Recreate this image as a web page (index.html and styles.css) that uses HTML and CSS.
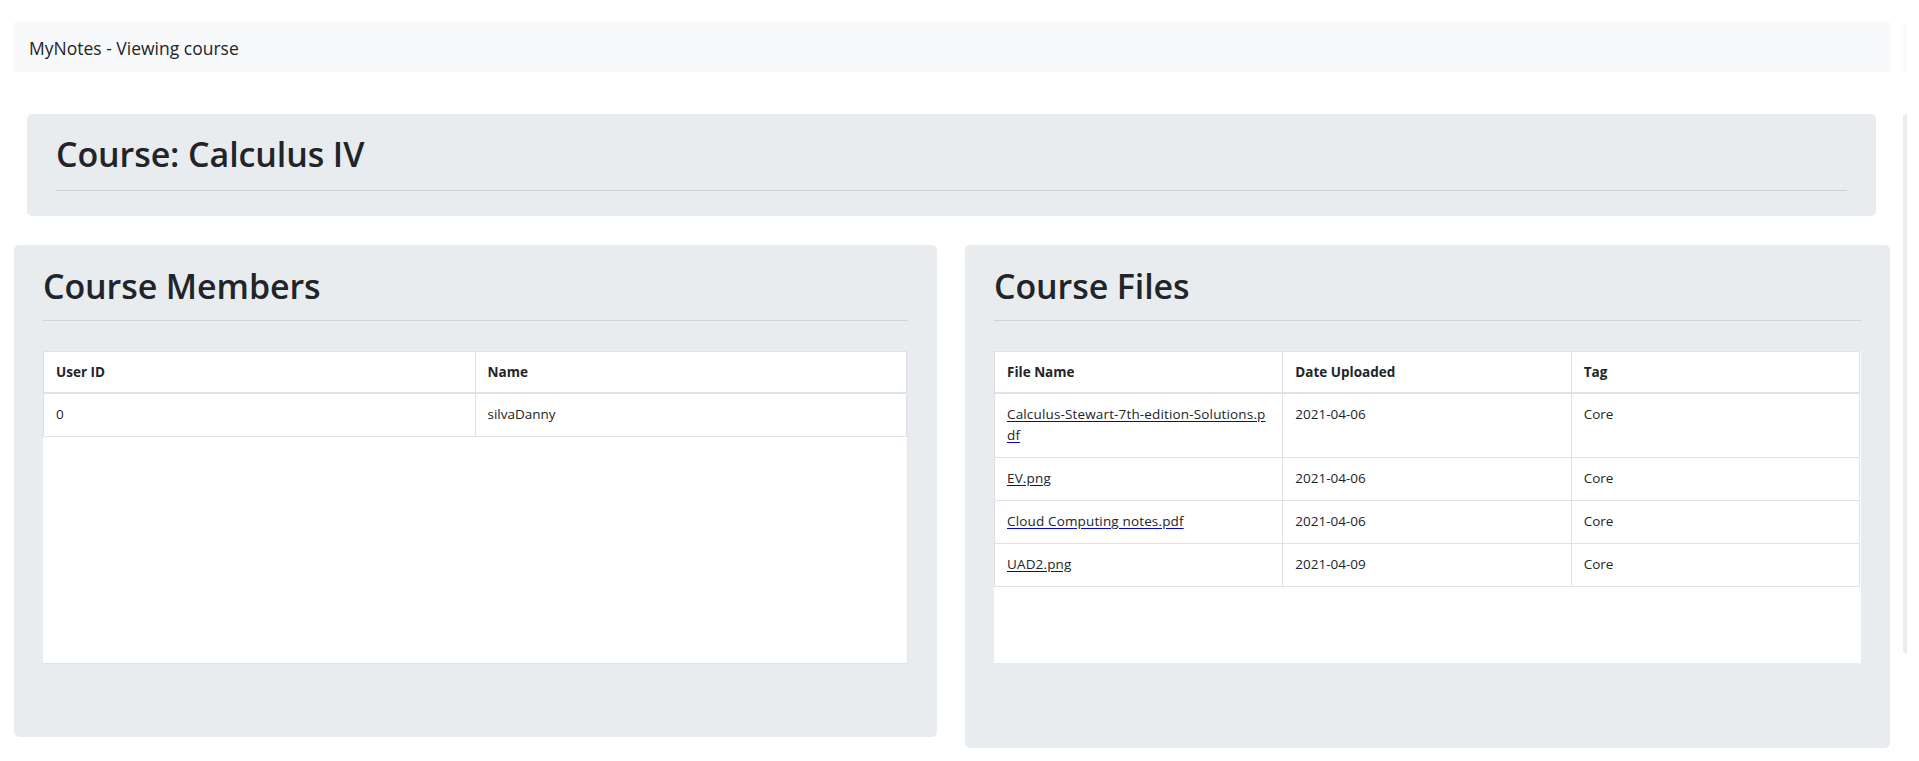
FILE: index.html
```html
<!DOCTYPE html>
<html lang="en">
<head>
<meta charset="utf-8">
<title>MyNotes - Viewing course</title>
<link rel="stylesheet" href="styles.css">
</head>
<body>
<div class="page">
  <nav class="navbar"><span class="brand">MyNotes - Viewing course</span></nav>
  <div class="strip strip-top"></div>

  <main class="content">
    <section class="jumbotron">
      <h1 class="title">Course: Calculus IV</h1>
      <hr class="rule">
    </section>

    <div class="cards">
      <section class="card card-members">
        <h2 class="title">Course Members</h2>
        <hr class="rule">
        <div class="table-box box-members">
          <table class="tbl">
            <thead>
              <tr><th>User ID</th><th>Name</th></tr>
            </thead>
            <tbody>
              <tr><td>0</td><td>silvaDanny</td></tr>
            </tbody>
          </table>
        </div>
      </section>

      <section class="card card-files">
        <h2 class="title">Course Files</h2>
        <hr class="rule">
        <div class="table-box box-files">
          <table class="tbl">
            <thead>
              <tr><th>File Name</th><th>Date Uploaded</th><th>Tag</th></tr>
            </thead>
            <tbody>
              <tr><td><a class="file" href="#">Calculus-Stewart-7th-edition-Solutions.pdf</a></td><td>2021-04-06</td><td>Core</td></tr>
              <tr><td><a class="file" href="#">EV.png</a></td><td>2021-04-06</td><td>Core</td></tr>
              <tr><td><a class="file" href="#">Cloud Computing notes.pdf</a></td><td>2021-04-06</td><td>Core</td></tr>
              <tr><td><a class="file" href="#">UAD2.png</a></td><td>2021-04-09</td><td>Core</td></tr>
            </tbody>
          </table>
        </div>
      </section>
    </div>
  </main>
  <div class="strip strip-side"></div>
</div>
</body>
</html>
```

FILE: styles.css
```css
* { box-sizing: border-box; }

html, body {
  margin: 0;
  padding: 0;
  background: #ffffff;
}

body {
  font-family: "Open Sans", "Noto Sans", "Liberation Sans", sans-serif;
  color: #212529;
}

.page {
  display: grid;
  grid-template-columns: 1876px 4px;
  column-gap: 13px;
  row-gap: 42px;
  padding: 22px 0 0 14px;
  align-items: start;
}

.navbar {
  height: 50px;
  background: #f8f9fa;
  padding: 1px 0 0 15px;
  display: flex;
  align-items: center;
}

.brand {
  font-size: 17.5px;
  line-height: 24px;
  color: #212529;
}

.strip-top {
  height: 50px;
  background: #fbfbfc;
}

.strip-side {
  height: 539px;
  background: #e9ecef;
  border-radius: 3px 0 0 3px;
}

.content {
  display: flex;
  flex-direction: column;
}

.jumbotron {
  margin: 0 14px 0 13px;
  height: 102px;
  background: #e9ecef;
  border-radius: 5px;
  padding: 20px 29px 0 29px;
}

.title {
  margin: 0;
  font-size: 34px;
  font-weight: 600;
  line-height: 41px;
  color: #212529;
  letter-spacing: -0.1px;
}

.rule {
  margin: 0;
  border: 0;
  height: 1px;
  background: #ced3d8;
}

.jumbotron .rule { margin-top: 15px; }

.cards {
  margin-top: 29px;
  display: flex;
  gap: 28px;
  align-items: flex-start;
}

.card {
  background: #e9ecef;
  border-radius: 5px;
  padding: 21px 29px 0 29px;
}

.card-members { width: 923px; height: 492px; }
.card-files { width: 925px; height: 503px; }

.card .rule { margin-top: 13px; }

.table-box {
  margin-top: 30px;
  height: 313px;
  background: #ffffff;
}

.box-members {
  border-bottom: 1px solid #dee2e6;
  border-right: 1px solid #e4e7ea;
}

.box-files { height: 312px; padding-right: 1px; }

.tbl {
  width: 100%;
  table-layout: fixed;
  border-collapse: collapse;
  font-size: 13.5px;
  line-height: 21px;
  color: #212529;
}

.tbl th,
.tbl td {
  border: 1px solid #dee2e6;
  text-align: left;
  vertical-align: top;
  padding: 10px 12px 11px 12px;
  word-break: break-all;
}

.tbl th {
  font-weight: 700;
  padding: 10px 12px 9px 12px;
  border-bottom-width: 2px;
}

.file {
  color: #212529;
  text-decoration: underline;
  text-decoration-color: #0000ee;
  text-underline-offset: 2px;
  letter-spacing: 0.15px;
}
```
